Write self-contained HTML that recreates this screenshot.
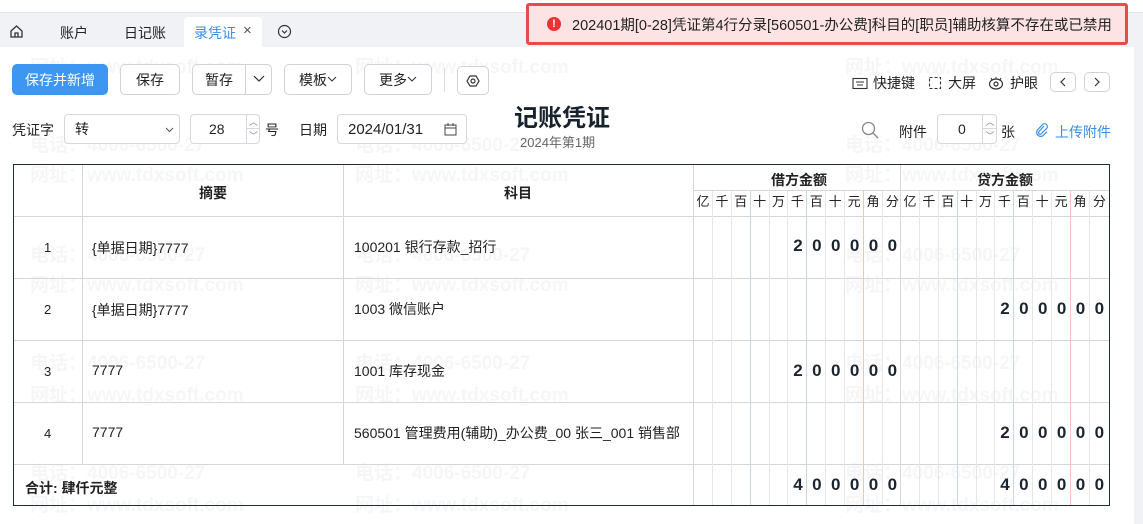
<!DOCTYPE html><html><head><meta charset="utf-8"><style>
*{box-sizing:border-box;margin:0;padding:0}
body{width:1143px;height:524px;overflow:hidden;background:#fff;font-family:"Liberation Sans","Noto Sans CJK SC",sans-serif;font-size:13px;color:#222;position:relative}
.a{position:absolute}
.wm{position:absolute;color:rgba(0,0,0,0.035);font-size:19px;font-weight:bold;white-space:nowrap}
.btn{position:absolute;top:64px;height:31px;border:1px solid #cfd3da;border-radius:5px;background:#fff;font-size:14px;display:flex;align-items:center;justify-content:center;color:#222}
.inp{position:absolute;height:30px;border:1px solid #d5d8de;border-radius:4px;background:#fff;display:flex;align-items:center;font-size:14px}
.digits{position:absolute;display:flex}
.digits div{width:18.9px;height:100%;border-right:1px solid #e3e6ea;text-align:center}
.digits div.b{border-right-color:#c6d8ee}
.digits div.r{border-right-color:#f3c3b8}
.num{font-weight:bold;font-size:17px;color:#1a2530;letter-spacing:0}
.hl{position:absolute;height:1px;background:#d3d7dc}
.vl{position:absolute;width:1px;background:#d3d7dc}
</style></head><body>
<div class="wm" style="left:30px;top:20px">电话：4006-6500-27</div><div class="wm" style="left:355px;top:20px">电话：4006-6500-27</div><div class="wm" style="left:845px;top:20px">电话：4006-6500-27</div>
<div class="wm" style="left:30px;top:52px">网址：www.tdxsoft.com</div><div class="wm" style="left:355px;top:52px">网址：www.tdxsoft.com</div><div class="wm" style="left:845px;top:52px">网址：www.tdxsoft.com</div>
<div class="wm" style="left:30px;top:130px">电话：4006-6500-27</div><div class="wm" style="left:355px;top:130px">电话：4006-6500-27</div><div class="wm" style="left:845px;top:130px">电话：4006-6500-27</div>
<div class="wm" style="left:30px;top:160px">网址：www.tdxsoft.com</div><div class="wm" style="left:355px;top:160px">网址：www.tdxsoft.com</div><div class="wm" style="left:845px;top:160px">网址：www.tdxsoft.com</div>
<div class="wm" style="left:30px;top:240px">电话：4006-6500-27</div><div class="wm" style="left:355px;top:240px">电话：4006-6500-27</div><div class="wm" style="left:845px;top:240px">电话：4006-6500-27</div>
<div class="wm" style="left:30px;top:270px">网址：www.tdxsoft.com</div><div class="wm" style="left:355px;top:270px">网址：www.tdxsoft.com</div><div class="wm" style="left:845px;top:270px">网址：www.tdxsoft.com</div>
<div class="wm" style="left:30px;top:348px">电话：4006-6500-27</div><div class="wm" style="left:355px;top:348px">电话：4006-6500-27</div><div class="wm" style="left:845px;top:348px">电话：4006-6500-27</div>
<div class="wm" style="left:30px;top:380px">网址：www.tdxsoft.com</div><div class="wm" style="left:355px;top:380px">网址：www.tdxsoft.com</div><div class="wm" style="left:845px;top:380px">网址：www.tdxsoft.com</div>
<div class="wm" style="left:30px;top:458px">电话：4006-6500-27</div><div class="wm" style="left:355px;top:458px">电话：4006-6500-27</div><div class="wm" style="left:845px;top:458px">电话：4006-6500-27</div>
<div class="wm" style="left:30px;top:490px">网址：www.tdxsoft.com</div><div class="wm" style="left:355px;top:490px">网址：www.tdxsoft.com</div><div class="wm" style="left:845px;top:490px">网址：www.tdxsoft.com</div>

<div class="a" style="left:0;top:12px;width:1143px;height:35px;background:#f0f2f5;border-top:1px solid #e4e6ea"></div>
<svg class="a" style="left:9px;top:24px" width="15" height="15" viewBox="0 0 15 15"><path d="M2 7 L7.5 2 L13 7 V13 H2 Z M6 13 V9 H9 V13" fill="none" stroke="#333" stroke-width="1.3"/></svg>
<div class="a" style="left:60px;top:23px;font-size:14px">账户</div>
<div class="a" style="left:124px;top:23px;font-size:14px">日记账</div>
<div class="a" style="left:184px;top:17px;width:78px;height:30px;background:#fff;border-radius:4px 4px 0 0"></div>
<div class="a" style="left:194px;top:23px;font-size:14px;color:#3a8ee6">录凭证</div>
<div class="a" style="left:243px;top:22px;font-size:15px;color:#555">×</div>
<svg class="a" style="left:277px;top:24px" width="15" height="15" viewBox="0 0 15 15"><circle cx="7.5" cy="7.5" r="6" fill="none" stroke="#333" stroke-width="1.2"/><path d="M5 6.5 L7.5 9 L10 6.5" fill="none" stroke="#333" stroke-width="1.2"/></svg>

<div class="a" style="left:526px;top:3px;width:602px;height:42px;background:#fde3e3;border:3px solid #e94b4b;border-radius:3px;display:flex;align-items:center;padding-left:18px;font-size:14.5px;color:#222;white-space:nowrap">
<span style="display:inline-block;width:14px;height:14px;border-radius:50%;background:#ea3434;color:#fff;font-size:11px;font-weight:bold;text-align:center;line-height:14px;margin-right:11px">!</span>202401期[0-28]凭证第4行分录[560501-办公费]科目的[职员]辅助核算不存在或已禁用</div>

<div class="btn" style="left:12px;width:96px;background:#3d97f2;border-color:#3d97f2;color:#fff">保存并新增</div>
<div class="btn" style="left:120px;width:60px">保存</div>
<div class="btn" style="left:192px;width:80px;justify-content:flex-start;padding-left:12px">暂存<span class="a" style="left:52px;top:0;height:29px;border-left:1px solid #cfd3da"></span><svg class="a" style="left:60px;top:10px" width="12" height="8"><path d="M1 1 L6 6 L11 1" fill="none" stroke="#333" stroke-width="1.2"/></svg></div>
<div class="btn" style="left:284px;width:68px">模板<svg width="10" height="7"><path d="M1 1 L5 5 L9 1" fill="none" stroke="#333" stroke-width="1.1"/></svg></div>
<div class="btn" style="left:364px;width:68px">更多<svg width="10" height="7"><path d="M1 1 L5 5 L9 1" fill="none" stroke="#333" stroke-width="1.1"/></svg></div>
<div class="a" style="left:444px;top:68px;width:1px;height:24px;background:#ddd"></div>
<div class="btn" style="left:457px;top:66px;width:32px;height:29px"><svg width="14" height="14" viewBox="0 0 14 14"><path d="M4 2 H10 L13 7 L10 12 H4 L1 7 Z" fill="none" stroke="#333" stroke-width="1.2"/><circle cx="7" cy="7" r="2" fill="none" stroke="#333" stroke-width="1.2"/></svg></div>

<div class="a" style="left:852px;top:73px;font-size:14px;display:flex;align-items:center"><svg width="16" height="13"><rect x="1" y="1.5" width="14" height="10" fill="none" stroke="#333" stroke-width="1.1"/><path d="M4 5h8M5 8h6" stroke="#333"/></svg><span style="margin-left:5px">快捷键</span></div>
<div class="a" style="left:928px;top:73px;font-size:14px;display:flex;align-items:center"><svg width="14" height="14"><rect x="1.5" y="1.5" width="11" height="11" fill="none" stroke="#333" stroke-width="1.1" stroke-dasharray="3 2"/></svg><span style="margin-left:6px">大屏</span></div>
<div class="a" style="left:988px;top:73px;font-size:14px;display:flex;align-items:center"><svg width="16" height="14"><ellipse cx="8" cy="8" rx="6.5" ry="5" fill="none" stroke="#333" stroke-width="1.2"/><circle cx="8" cy="8" r="2" fill="none" stroke="#333" stroke-width="1.2"/><path d="M8 1v2M3 2l1 2M13 2l-1 2" stroke="#333"/></svg><span style="margin-left:6px">护眼</span></div>
<div class="btn" style="left:1050px;top:72px;width:26px;height:20px"><svg width="8" height="10"><path d="M6 1 L2 5 L6 9" fill="none" stroke="#333" stroke-width="1.2"/></svg></div>
<div class="btn" style="left:1084px;top:72px;width:26px;height:20px"><svg width="8" height="10"><path d="M2 1 L6 5 L2 9" fill="none" stroke="#333" stroke-width="1.2"/></svg></div>

<div class="a" style="left:12px;top:120px;font-size:14px">凭证字</div>
<div class="inp" style="left:64px;top:114px;width:116px;padding-left:10px">转<svg class="a" style="left:100px;top:12px" width="9" height="6"><path d="M1 1 L4.5 4.5 L8 1" fill="none" stroke="#555"/></svg></div>
<div class="inp" style="left:190px;top:114px;width:70px;padding-left:18px">28<div class="a" style="left:55px;top:0;width:14px;height:28px;border-left:1px solid #d5d8de"><div style="height:14px;border-bottom:1px solid #d5d8de;font-size:9px;text-align:center;color:#888">︿</div><div style="font-size:9px;text-align:center;color:#888">﹀</div></div></div>
<div class="a" style="left:265px;top:120px;font-size:14px">号</div>
<div class="a" style="left:299px;top:120px;font-size:14px">日期</div>
<div class="inp" style="left:337px;top:114px;width:130px;padding-left:10px;font-size:15px">2024/01/31<svg class="a" style="left:106px;top:8px" width="13" height="13"><rect x="1" y="2" width="11" height="10" fill="none" stroke="#444"/><path d="M1 5h11M4 0v3M9 0v3" stroke="#444"/></svg></div>
<div class="a" style="left:514px;top:98px;font-size:24px;font-weight:bold;color:#16222e">记账凭证</div>
<div class="a" style="left:520px;top:132px;font-size:13px;color:#666">2024年第1期</div>
<svg class="a" style="left:861px;top:121px" width="18" height="18"><circle cx="7.5" cy="7.5" r="6" fill="none" stroke="#888" stroke-width="1.3"/><path d="M12 12 L17 17" stroke="#888" stroke-width="1.4"/></svg>
<div class="a" style="left:899px;top:122px;font-size:14px">附件</div>
<div class="inp" style="left:937px;top:114px;width:60px;padding-left:20px">0<div class="a" style="left:44px;top:0;width:15px;height:28px;border-left:1px solid #d5d8de"><div style="height:14px;border-bottom:1px solid #d5d8de;font-size:9px;text-align:center;color:#888">︿</div><div style="font-size:9px;text-align:center;color:#888">﹀</div></div></div>
<div class="a" style="left:1001px;top:122px;font-size:14px">张</div>
<svg class="a" style="left:1035px;top:123px" width="14" height="14" viewBox="0 0 14 14"><path d="M9 3 L4 8.5 a1.6 1.6 0 0 0 2.3 2.3 L11.5 5.5 a2.8 2.8 0 0 0 -4 -4 L2.5 7 a4 4 0 0 0 5.6 5.6 L12 8.7" fill="none" stroke="#3a8ee6" stroke-width="1.2"/></svg>
<div class="a" style="left:1055px;top:122px;font-size:14px;color:#3a8ee6">上传附件</div>

<div class="a" style="left:1134px;top:47px;width:9px;height:477px;background:#f0f2f5"></div>

<div class="a" style="left:13px;top:164px;width:1097px;height:342px;border:1px solid #1f2d3a"></div>
<div class="hl" style="left:14px;top:216px;width:1095px"></div>
<div class="hl" style="left:14px;top:278px;width:1095px"></div>
<div class="hl" style="left:14px;top:340px;width:1095px"></div>
<div class="hl" style="left:14px;top:402px;width:1095px"></div>
<div class="hl" style="left:14px;top:464px;width:1095px"></div>
<div class="hl" style="left:693px;top:190px;width:416px"></div>
<div class="vl" style="left:82px;top:165px;height:299px"></div>
<div class="vl" style="left:343px;top:165px;height:299px"></div>
<div class="vl" style="left:693px;top:165px;height:340px"></div>
<div class="vl" style="left:900px;top:165px;height:340px"></div>
<div class="digits" style="left:694px;top:191px;height:314px"><div>亿</div><div>千</div><div class="b">百</div><div>十</div><div>万</div><div class="b">千</div><div>百</div><div>十</div><div class="r">元</div><div>角</div><div style="border:none">分</div></div>
<div class="digits" style="left:901px;top:191px;height:314px"><div>亿</div><div>千</div><div class="b">百</div><div>十</div><div>万</div><div class="b">千</div><div>百</div><div>十</div><div class="r">元</div><div>角</div><div style="border:none">分</div></div>
<div class="a" style="left:199px;top:183px;font-size:14px;font-weight:bold">摘要</div>
<div class="a" style="left:504px;top:183px;font-size:14px;font-weight:bold">科目</div>
<div class="a" style="left:771px;top:170px;font-size:14px;font-weight:bold">借方金额</div>
<div class="a" style="left:977px;top:170px;font-size:14px;font-weight:bold">贷方金额</div>

<div class="a" style="left:44px;top:240px">1</div><div class="a" style="left:92px;top:238px;font-size:14px">{单据日期}7777</div><div class="a" style="left:354px;top:237px;font-size:14px">100201 银行存款_招行</div>
<div class="a" style="left:44px;top:302px">2</div><div class="a" style="left:92px;top:300px;font-size:14px">{单据日期}7777</div><div class="a" style="left:354px;top:299px;font-size:14px">1003 微信账户</div>
<div class="a" style="left:44px;top:364px">3</div><div class="a" style="left:92px;top:362px;font-size:14px">7777</div><div class="a" style="left:354px;top:361px;font-size:14px">1001 库存现金</div>
<div class="a" style="left:44px;top:426px">4</div><div class="a" style="left:92px;top:424px;font-size:14px">7777</div><div class="a" style="left:354px;top:423px;font-size:14px">560501 管理费用(辅助)_办公费_00 张三_001 销售部</div>
<div class="a" style="left:25px;top:478px;font-size:14px;font-weight:bold">合计: 肆仟元整</div>

<div class="digits num" style="left:788.5px;top:236px"><div style="border:none">2</div><div style="border:none">0</div><div style="border:none">0</div><div style="border:none">0</div><div style="border:none">0</div><div style="border:none">0</div></div>
<div class="digits num" style="left:995.5px;top:299px"><div style="border:none">2</div><div style="border:none">0</div><div style="border:none">0</div><div style="border:none">0</div><div style="border:none">0</div><div style="border:none">0</div></div>
<div class="digits num" style="left:788.5px;top:361px"><div style="border:none">2</div><div style="border:none">0</div><div style="border:none">0</div><div style="border:none">0</div><div style="border:none">0</div><div style="border:none">0</div></div>
<div class="digits num" style="left:995.5px;top:423px"><div style="border:none">2</div><div style="border:none">0</div><div style="border:none">0</div><div style="border:none">0</div><div style="border:none">0</div><div style="border:none">0</div></div>
<div class="digits num" style="left:788.5px;top:475px"><div style="border:none">4</div><div style="border:none">0</div><div style="border:none">0</div><div style="border:none">0</div><div style="border:none">0</div><div style="border:none">0</div></div>
<div class="digits num" style="left:995.5px;top:475px"><div style="border:none">4</div><div style="border:none">0</div><div style="border:none">0</div><div style="border:none">0</div><div style="border:none">0</div><div style="border:none">0</div></div>
</body></html>
